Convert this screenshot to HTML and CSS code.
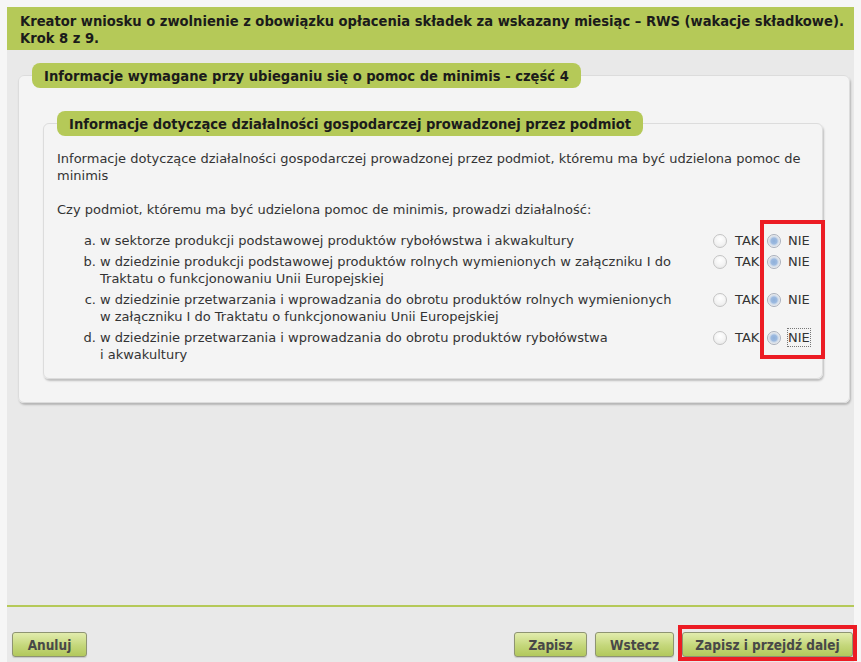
FILE: index.html
```html
<!DOCTYPE html>
<html lang="pl">
<head>
<meta charset="utf-8">
<title>Kreator wniosku RWS</title>
<link rel="stylesheet" href="styles.css">
</head>
<body>
<div class="page">
  <div class="header">Kreator wniosku o zwolnienie z obowiązku opłacenia składek za wskazany miesiąc – RWS (wakacje składkowe).<br>Krok 8 z 9.</div>
  <div class="content">
    <fieldset class="box outer">
      <legend class="pill">Informacje wymagane przy ubieganiu się o pomoc de minimis - część 4</legend>
      <div class="outer-body">
        <fieldset class="box inner">
          <legend class="pill">Informacje dotyczące działalności gospodarczej prowadzonej przez podmiot</legend>
          <div class="inner-body">
            <p class="intro">Informacje dotyczące działalności gospodarczej prowadzonej przez podmiot, któremu ma być udzielona pomoc de<br>minimis</p>
            <p class="question">Czy podmiot, któremu ma być udzielona pomoc de minimis, prowadzi działalność:</p>
            <div class="questions">
              <div class="row">
                <span class="marker">a.</span>
                <span class="qtext">w sektorze produkcji podstawowej produktów rybołówstwa i akwakultury</span>
                <span class="choices"><span class="radio"></span><span class="lbl tak">TAK</span><span class="radio checked"></span><span class="lbl">NIE</span></span>
              </div>
              <div class="row">
                <span class="marker">b.</span>
                <span class="qtext">w dziedzinie produkcji podstawowej produktów rolnych wymienionych w załączniku I do<br>Traktatu o funkcjonowaniu Unii Europejskiej</span>
                <span class="choices"><span class="radio"></span><span class="lbl tak">TAK</span><span class="radio checked"></span><span class="lbl">NIE</span></span>
              </div>
              <div class="row">
                <span class="marker">c.</span>
                <span class="qtext">w dziedzinie przetwarzania i wprowadzania do obrotu produktów rolnych wymienionych<br>w załączniku I do Traktatu o funkcjonowaniu Unii Europejskiej</span>
                <span class="choices"><span class="radio"></span><span class="lbl tak">TAK</span><span class="radio checked"></span><span class="lbl">NIE</span></span>
              </div>
              <div class="row">
                <span class="marker">d.</span>
                <span class="qtext">w dziedzinie przetwarzania i wprowadzania do obrotu produktów rybołówstwa<br>i akwakultury</span>
                <span class="choices"><span class="radio"></span><span class="lbl tak">TAK</span><span class="radio checked"></span><span class="lbl focus">NIE</span></span>
              </div>
              <div class="mark mark-nie"></div>
            </div>
          </div>
        </fieldset>
      </div>
    </fieldset>
  </div>
  <div class="footer">
    <button class="btn btn-cancel">Anuluj</button>
    <div class="right-btns">
      <button class="btn btn-save">Zapisz</button>
      <button class="btn btn-back">Wstecz</button>
      <span class="btn-wrap"><button class="btn btn-next">Zapisz i przejdź dalej</button><span class="mark mark-btn"></span></span>
    </div>
  </div>
</div>
</body>
</html>
```

FILE: styles.css
```css
html, body {
  margin: 0;
  padding: 0;
  height: 662px;
  overflow: hidden;
}

body {
  background: #f6f6f6;
  font-family: "DejaVu Sans", sans-serif;
  font-size: 13px;
  line-height: 17px;
  color: #333;
}

.page {
  margin: 7px 0 0 7px;
  width: 847px;
  height: 655px;
  display: flex;
  flex-direction: column;
  background: #e9e9e9;
}

.header,
.pill,
.btn {
  font-family: "DejaVu Sans Condensed", "DejaVu Sans", sans-serif;
  font-stretch: condensed;
  font-weight: bold;
}

.header {
  flex: none;
  background: #b5c958;
  color: #1b1b1b;
  font-size: 14.6px;
  line-height: 17px;
  padding: 5px 10px 4px 13px;
}

.content {
  flex: none;
  height: 542px;
  border-bottom: 2px solid #b5c958;
  padding: 13px 4px 0 11px;
  box-sizing: content-box;
}

.box {
  margin: 0;
  padding: 0;
  min-width: 0;
  background: #f4f4f4;
  border: 1px solid #dcdcdc;
  border-radius: 6px;
  box-shadow: 1px 2px 2px rgba(0, 0, 0, 0.22);
}

.pill {
  background: #b5c958;
  color: #1b1b1b;
  font-size: 14.6px;
  line-height: 17px;
  padding: 4px 12px;
  border-radius: 8px;
  margin-left: 13px;
}

.outer-body {
  padding: 23px 26px 23px 24px;
}

.inner-body {
  padding: 14px 4px 13px 13px;
}

.intro,
.question {
  margin: 0;
}

.question {
  margin-top: 17px;
}

.questions {
  position: relative;
  margin-top: 12px;
}

.row {
  display: grid;
  grid-template-columns: 43px 613px auto;
  padding: 2px 0;
  align-items: start;
}

.marker {
  text-align: right;
  padding-right: 4px;
}

.choices {
  display: flex;
  align-items: center;
  height: 17px;
}

.radio {
  width: 12px;
  height: 12px;
  border-radius: 50%;
  border: 1px solid #c4c4c4;
  background: radial-gradient(circle at 50% 35%, #ffffff 0%, #f3f3f3 55%, #e3e3e3 100%);
  box-sizing: content-box;
  flex: none;
}

.radio.checked {
  border-color: #aab0bc;
  background: radial-gradient(circle, #8fb0d9 0, #9dbae0 3px, #c6d5e8 4px, #f0f0f0 6px);
}

.lbl {
  margin-left: 7px;
}

.lbl.tak {
  margin-left: 8px;
  width: 32px;
}

.lbl.focus {
  outline: 1px dotted #777;
  outline-offset: 0;
}

.mark {
  position: absolute;
  border: 4px solid #ec1c24;
  box-sizing: border-box;
  pointer-events: none;
}

.mark-nie {
  left: 703px;
  top: -10px;
  width: 65px;
  height: 139px;
}

.footer {
  flex: none;
  display: flex;
  justify-content: space-between;
  align-items: flex-start;
  padding: 25px 1px 0 5px;
}

.right-btns {
  display: flex;
  gap: 8px;
}

.btn {
  font-size: 13.5px;
  color: #484848;
  height: 25px;
  padding: 0;
  white-space: nowrap;
  border: 1px solid #8e9472;
  border-radius: 3px;
  background: linear-gradient(#e2ecae, #c4d77a 55%, #b2c85c);
  box-shadow: 0 1px 1px rgba(0, 0, 0, 0.15);
  cursor: pointer;
}

.btn-cancel {
  width: 75px;
}

.btn-save {
  width: 73px;
}

.btn-back {
  width: 79px;
}

.btn-next {
  width: 171px;
}

.btn-wrap {
  position: relative;
  display: block;
}

.mark-btn {
  left: -4px;
  top: -7px;
  right: -4px;
  bottom: -4px;
}
```
